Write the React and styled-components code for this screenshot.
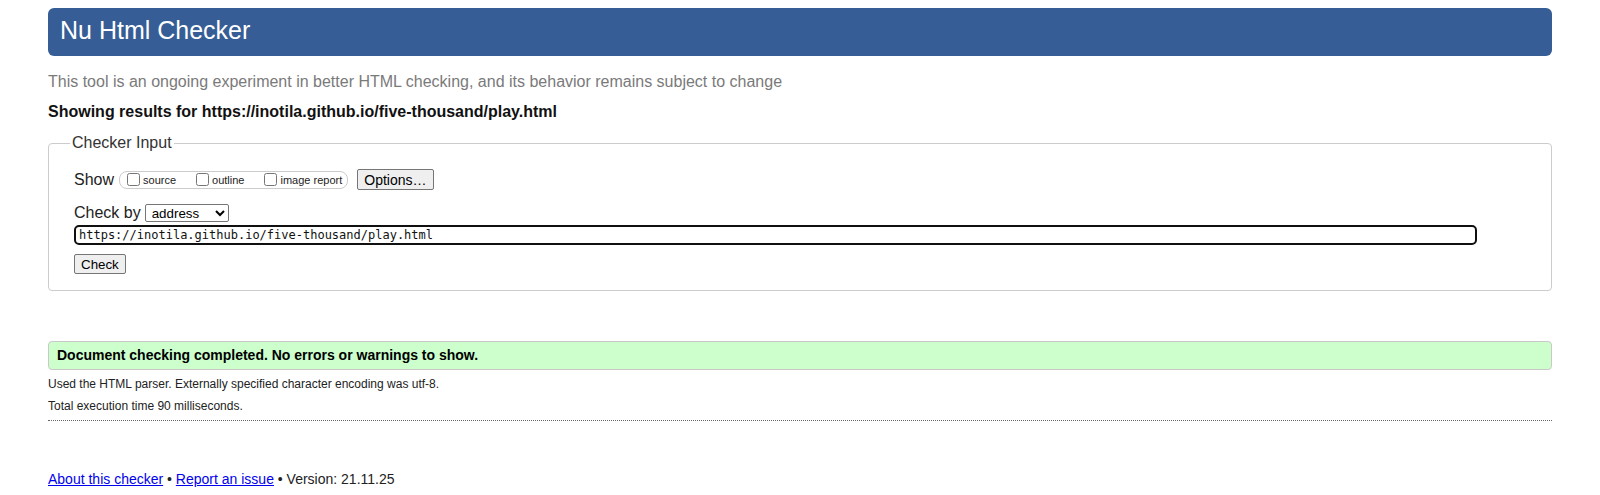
import React from 'react';
import styled, { createGlobalStyle } from 'styled-components';

const GlobalStyle = createGlobalStyle`
  html, body {
    background: #fff;
  }
  body {
    margin: 8px 48px 0;
    font-family: 'Liberation Sans', Arial, sans-serif;
    color: #222;
  }
`;

const Title = styled.h1`
  margin: 0;
  height: 48px;
  padding: 0 12px;
  line-height: 45px;
  font-size: 25px;
  font-weight: normal;
  color: #fff;
  background: #365d95;
  border-radius: 6px;
`;

const Tagline = styled.p`
  margin: 16px 0 0;
  font-size: 16px;
  line-height: 20px;
  color: #7a7a7a;
`;

const ResultsFor = styled.p`
  margin: 10px 0 0;
  font-size: 16px;
  line-height: 20px;
  font-weight: bold;
  color: #111;
`;

const InputBox = styled.fieldset`
  margin: 12px 0 0;
  padding: 16px 25px 16px;
  border: 1px solid #ccc;
  border-radius: 4px;
  min-width: 0;
`;

const Legend = styled.legend`
  margin-left: -4px;
  padding: 0 2px 2px;
  font-size: 16px;
  line-height: 17px;
  color: #333;
`;

const Row = styled.div`
  display: flex;
  align-items: center;
  height: ${(p) => p.h}px;
  margin-top: ${(p) => p.mt || 0}px;
  font-size: 16px;
  color: #222;
`;

const Group = styled.div`
  display: flex;
  align-items: center;
  gap: 20px;
  height: 18px;
  box-sizing: border-box;
  margin-left: 5px;
  padding: 0 5px 0 7px;
  border: 1px solid #ccc;
  border-radius: 8px;
`;

const Opt = styled.label`
  display: inline-flex;
  align-items: center;
  gap: 3px;
  font-size: 11px;
  color: #222;

  input {
    margin: 0;
    width: 13px;
    height: 13px;
  }
`;

const Button = styled.button`
  margin-left: ${(p) => p.ml || 0}px;
  height: ${(p) => p.h || 20}px;
  padding: 0 6px;
  font-family: 'Liberation Sans', Arial, sans-serif;
  font-size: ${(p) => p.fs || 13.33}px;
  color: #000;
  background: #efefef;
  border: 1px solid #767676;
  border-radius: 2px;
`;

const Select = styled.select`
  margin-left: 4px;
  width: 84px;
  height: 18px;
  padding: 0 2px;
  font-family: 'Liberation Sans', Arial, sans-serif;
  font-size: 13.33px;
  color: #000;
  background: #fff;
  border: 1px solid #767676;
  border-radius: 2px;
`;

const UrlField = styled.input`
  box-sizing: border-box;
  width: calc(100% - 49px);
  height: 20px;
  padding: 0 3px;
  font-family: 'DejaVu Sans Mono', 'Liberation Mono', monospace;
  font-size: 12px;
  color: #111;
  border: 2px solid #101010;
  border-radius: 5px;
  outline: none;
`;

const Success = styled.div`
  margin-top: 50px;
  padding: 5px 8px;
  font-size: 14px;
  line-height: 17px;
  font-weight: bold;
  color: #000;
  background: #ccffcc;
  border: 1px solid #c8c8c8;
  border-radius: 4px;
`;

const Details = styled.div`
  margin-top: 3px;
  padding-bottom: 3px;
  border-bottom: 1px dotted #666;

  p {
    margin: 0;
    font-size: 12px;
    line-height: 22px;
    color: #222;
  }
`;

const Footer = styled.p`
  margin: 50px 0 0;
  font-size: 14px;
  line-height: 17px;
  color: #222;

  a {
    color: #0000ee;
    text-decoration: underline;
  }
`;

export default function App() {
  const url = 'https://inotila.github.io/five-thousand/play.html';

  return (
    <>
      <GlobalStyle />
      <Title>Nu Html Checker</Title>
      <Tagline>
        This tool is an ongoing experiment in better HTML checking, and its behavior remains subject to change
      </Tagline>
      <ResultsFor>Showing results for {url}</ResultsFor>

      <InputBox>
        <Legend>Checker Input</Legend>
        <Row h={21}>
          Show
          <Group>
            <Opt><input type="checkbox" />source</Opt>
            <Opt><input type="checkbox" />outline</Opt>
            <Opt><input type="checkbox" />image report</Opt>
          </Group>
          <Button ml={9} h={21} fs={14}>Options…</Button>
        </Row>
        <Row h={18} mt={14}>
          Check by
          <Select defaultValue="address">
            <option value="address">address</option>
            <option value="file">file upload</option>
            <option value="text">text input</option>
          </Select>
        </Row>
        <Row h={20} mt={3}>
          <UrlField type="url" defaultValue={url} />
        </Row>
        <Row h={20} mt={9}>
          <Button>Check</Button>
        </Row>
      </InputBox>

      <Success>Document checking completed. No errors or warnings to show.</Success>
      <Details>
        <p>Used the HTML parser. Externally specified character encoding was utf-8.</p>
        <p>Total execution time 90 milliseconds.</p>
      </Details>

      <Footer>
        <a href="#about">About this checker</a> • <a href="#issue">Report an issue</a> • Version: 21.11.25
      </Footer>
    </>
  );
}
